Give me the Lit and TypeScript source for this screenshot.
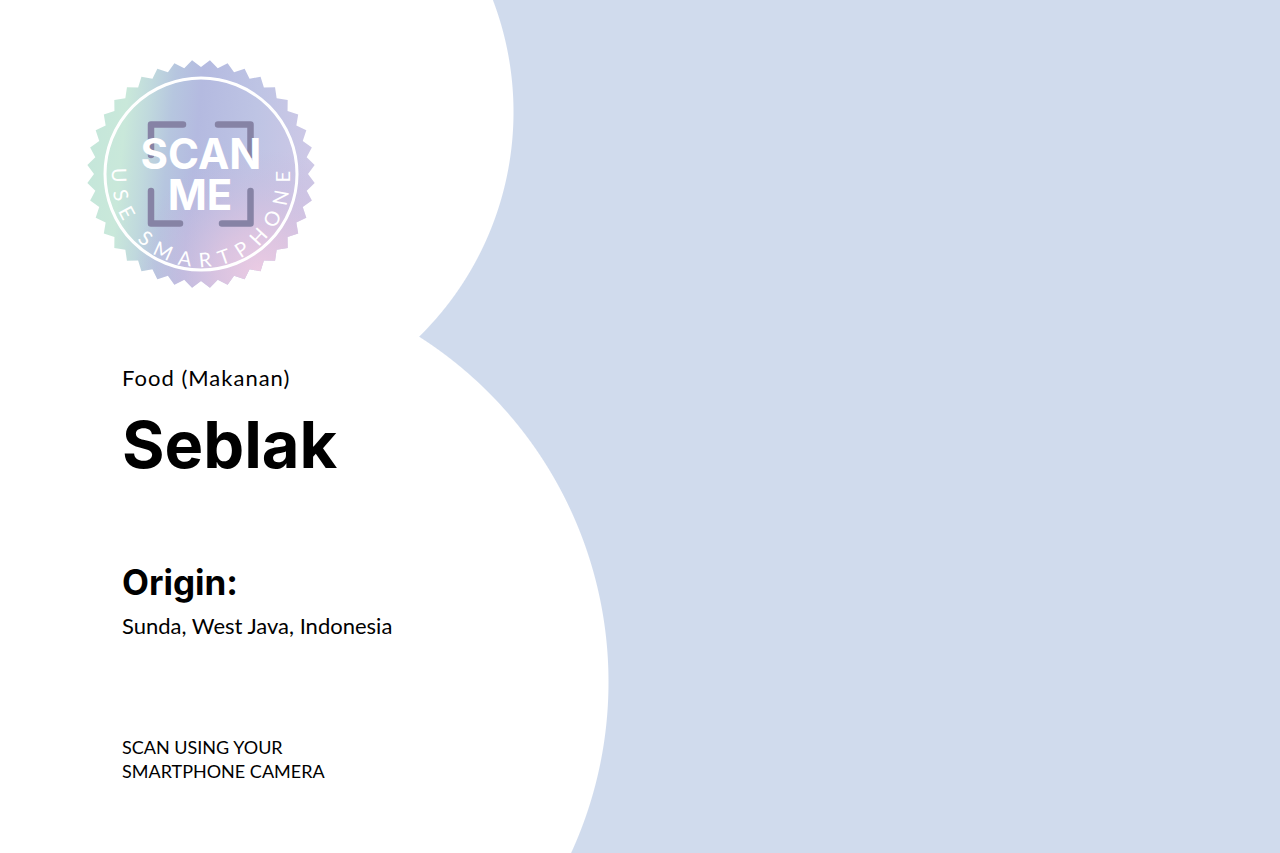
import { LitElement, html, css, svg } from "lit";
import { customElement } from "lit/decorators.js";

const TEETH = 40;

function sealPoints(cx: number, cy: number, tip: number, valley: number): string {
  const points: string[] = [];
  for (let i = 0; i < TEETH * 2; i++) {
    const angle = (i * Math.PI) / TEETH;
    const r = i % 2 === 0 ? valley : tip;
    points.push(`${(cx + r * Math.sin(angle)).toFixed(2)},${(cy - r * Math.cos(angle)).toFixed(2)}`);
  }
  return points.join(" ");
}

@customElement("scan-badge")
export class ScanBadge extends LitElement {
  static styles = css`
    :host {
      display: block;
      width: 228px;
    }
    .seal {
      display: block;
      width: 100%;
      height: auto;
    }
    .ring {
      fill: none;
      stroke: #fff;
      stroke-width: 3;
    }
    .bracket {
      fill: none;
      stroke: #8683a5;
      stroke-width: 6.5;
      stroke-linecap: round;
      stroke-linejoin: round;
    }
    .title {
      fill: #fff;
      font: 700 42px Inter, sans-serif;
      text-anchor: middle;
    }
    .curved {
      fill: #fff;
      font: 400 20px Lato, sans-serif;
      letter-spacing: 9px;
    }
  `;

  render() {
    return html`
      <svg class="seal" viewBox="0 0 228 228" role="img" aria-label="Scan me, use smartphone">
        <defs>
          <linearGradient id="base" x1="0" y1="0.1" x2="1" y2="0.2">
            <stop offset="0" stop-color="#c4e6da"></stop>
            <stop offset="0.18" stop-color="#c9e8da"></stop>
            <stop offset="0.28" stop-color="#c0d9dd"></stop>
            <stop offset="0.38" stop-color="#b6c6df"></stop>
            <stop offset="0.5" stop-color="#b4bae0"></stop>
            <stop offset="0.75" stop-color="#bec4e4"></stop>
            <stop offset="1" stop-color="#cdc8e6"></stop>
          </linearGradient>
          <radialGradient id="pink" cx="0.76" cy="0.94" r="0.55">
            <stop offset="0" stop-color="#eccbe3"></stop>
            <stop offset="0.35" stop-color="#e0c4e0" stop-opacity="0.8"></stop>
            <stop offset="1" stop-color="#c3b6de" stop-opacity="0"></stop>
          </radialGradient>
          <path id="arc" d="M25 108V118A89 89 0 0 0 203 118V98"></path>
        </defs>
        ${svg`<polygon points=${sealPoints(114, 114, 114, 107)} fill="url(#base)"></polygon>
        <polygon points=${sealPoints(114, 114, 114, 107)} fill="url(#pink)"></polygon>`}
        <circle class="ring" cx="114" cy="114" r="96"></circle>
        <path class="bracket" d="M64 95V64.500H96M131 64.500H163.500V95M64 131V163.500H93M135 163.500H163.500V131"></path>
        <text class="title" x="114" y="109">SCAN</text>
        <text class="title" x="113" y="150">ME</text>
        <text class="curved"><textPath href="#arc">USE SMARTPHONE</textPath></text>
      </svg>
    `;
  }
}

@customElement("app-root")
export class AppRoot extends LitElement {
  static styles = css`
    :host {
      display: block;
      font-family: Lato, sans-serif;
      color: #000;
    }
    .card {
      box-sizing: border-box;
      min-height: 100vh;
      padding: 60px 87px;
      background:
        radial-gradient(circle at 199px 112px, #fff 314px, transparent 315px),
        radial-gradient(circle at 199px 682px, #fff 409px, transparent 410px),
        #d0dbed;
    }
    .details {
      padding: 74px 35px 0;
    }
    .category,
    .name,
    .heading,
    .place,
    .hint {
      margin: 0;
    }
    .name,
    .heading {
      font-family: Inter, sans-serif;
      font-weight: 700;
    }
    .category,
    .place {
      font-size: 22px;
      line-height: 32px;
    }
    .category {
      letter-spacing: 1px;
    }
    .name {
      margin-top: 11px;
      font-size: 65px;
      line-height: 80px;
    }
    .heading {
      margin-top: 75px;
      font-size: 35px;
      line-height: 44px;
    }
    .place {
      margin-top: 6px;
    }
    .hint {
      margin-top: 93px;
      font-size: 18px;
      line-height: 24px;
    }
  `;

  render() {
    return html`
      <main class="card">
        <scan-badge></scan-badge>
        <div class="details">
          <p class="category">Food (Makanan)</p>
          <h1 class="name">Seblak</h1>
          <h2 class="heading">Origin:</h2>
          <p class="place">Sunda, West Java, Indonesia</p>
          <p class="hint">SCAN USING YOUR<br />SMARTPHONE CAMERA</p>
        </div>
      </main>
    `;
  }
}
